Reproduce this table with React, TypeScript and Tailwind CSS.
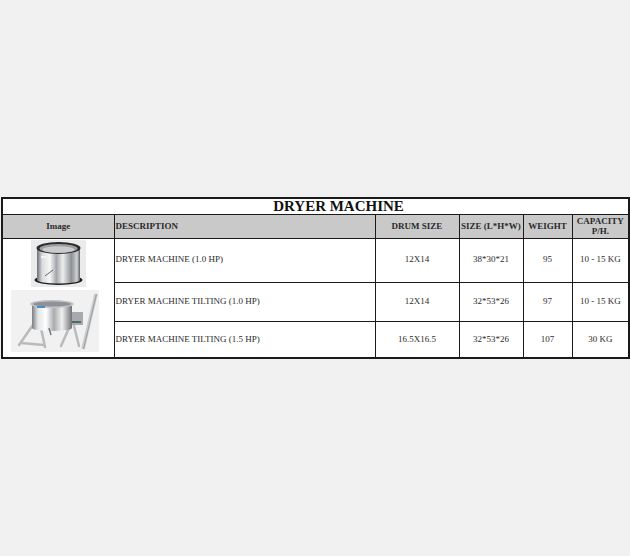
import React from 'react';

type Row = {
  desc: string;
  drum: string;
  size: string;
  weight: string;
  capacity: string;
  h: string;
};

const rows: Row[] = [
  { desc: 'DRYER MACHINE (1.0 HP)', drum: '12X14', size: '38*30*21', weight: '95', capacity: '10 - 15 KG', h: 'h-[44px]' },
  { desc: 'DRYER MACHINE TILTING (1.0 HP)', drum: '12X14', size: '32*53*26', weight: '97', capacity: '10 - 15 KG', h: 'h-[39px]' },
  { desc: 'DRYER MACHINE TILTING (1.5 HP)', drum: '16.5X16.5', size: '32*53*26', weight: '107', capacity: '30 KG', h: 'h-[37px]' },
];

function DrumPic() {
  return (
    <svg width="55" height="47" viewBox="0 0 55 47">
      <defs>
        <linearGradient id="steel" x1="0" x2="1" y1="0" y2="0">
          <stop offset="0" stopColor="#6b6e72" />
          <stop offset="0.12" stopColor="#d9dbdd" />
          <stop offset="0.3" stopColor="#f7f7f7" />
          <stop offset="0.45" stopColor="#a3a6aa" />
          <stop offset="0.6" stopColor="#eeeeee" />
          <stop offset="0.8" stopColor="#8d9094" />
          <stop offset="0.93" stopColor="#d0d2d4" />
          <stop offset="1" stopColor="#5c5f63" />
        </linearGradient>
      </defs>
      <rect width="55" height="47" fill="#ebebeb" />
      <ellipse cx="27.5" cy="40" rx="24" ry="5" fill="#1e1e1e" />
      <rect x="6" y="8" width="43" height="32" fill="url(#steel)" />
      <ellipse cx="27.5" cy="40" rx="21.5" ry="3.5" fill="url(#steel)" />
      <ellipse cx="27.5" cy="8" rx="22" ry="6" fill="#2a2a2a" />
      <ellipse cx="27.5" cy="8.5" rx="19" ry="4.5" fill="#9a9da1" />
      <ellipse cx="27.5" cy="9.5" rx="16" ry="3.2" fill="#c9cbcd" />
      <rect x="10" y="16" width="5" height="2" fill="#f2f2f2" />
      <line x1="14" y1="36" x2="22" y2="30" stroke="#444" strokeWidth="0.8" />
    </svg>
  );
}

function TiltPic() {
  return (
    <svg width="88" height="62" viewBox="0 0 88 62">
      <defs>
        <linearGradient id="steel2" x1="0" x2="1" y1="0" y2="0">
          <stop offset="0" stopColor="#7a7d81" />
          <stop offset="0.15" stopColor="#e4e5e6" />
          <stop offset="0.35" stopColor="#ffffff" />
          <stop offset="0.55" stopColor="#a9acb0" />
          <stop offset="0.75" stopColor="#f0f0f0" />
          <stop offset="1" stopColor="#6e7175" />
        </linearGradient>
      </defs>
      <rect width="88" height="62" fill="#f1f1f1" />
      {/* handle */}
      <line x1="72" y1="59" x2="85" y2="4" stroke="#c9cbcd" strokeWidth="3.5" />
      <line x1="72.5" y1="59" x2="85.5" y2="4" stroke="#8c8f93" strokeWidth="0.8" />
      {/* legs */}
      <g stroke="#b8babd" strokeWidth="2.5" strokeLinecap="round">
        <line x1="24" y1="32" x2="8" y2="55" />
        <line x1="30" y1="38" x2="34" y2="57" />
        <line x1="10" y1="53" x2="33" y2="55" />
        <line x1="62" y1="32" x2="68" y2="56" />
        <line x1="58" y1="38" x2="50" y2="56" />
      </g>
      {/* motor */}
      <rect x="60" y="22" width="12" height="13" fill="#a6a9ad" />
      <rect x="61" y="31" width="9" height="2" fill="#4f6a5a" />
      {/* bowl */}
      <rect x="21" y="14" width="40" height="24" fill="url(#steel2)" />
      <ellipse cx="41" cy="38" rx="20" ry="3" fill="url(#steel2)" />
      <ellipse cx="41" cy="14" rx="22" ry="4" fill="#bfc1c4" />
      <ellipse cx="41" cy="14" rx="19" ry="2.6" fill="#8e9195" />
      <rect x="26" y="16" width="8" height="2" fill="#4a8ec9" />
      <line x1="38" y1="38" x2="40" y2="45" stroke="#777" strokeWidth="1.5" />
    </svg>
  );
}

export default function App() {
  const cell = 'border-[1.5px] border-[#1a1a1a]';
  return (
    <div
      className="min-h-[556px] bg-[#f1f1f1] pt-[197px] px-[1px] text-[#222]"
      style={{ fontFamily: '"Liberation Serif", "Times New Roman", serif' }}
    >
      <table className="w-[627px] table-fixed border-collapse border-2 border-[#1a1a1a] bg-white">
        <colgroup>
          <col className="w-[112px]" />
          <col className="w-[261px]" />
          <col className="w-[84px]" />
          <col className="w-[64px]" />
          <col className="w-[49px]" />
          <col className="w-[57px]" />
        </colgroup>
        <tbody>
          <tr className="h-[16px]">
            <td colSpan={6} className={`${cell} pl-[46px] text-center text-[15px] font-bold leading-[14px] text-[#111]`}>
              DRYER MACHINE
            </td>
          </tr>
          <tr className="h-[24px] bg-[#c9c9c9] text-[9px] font-bold leading-[10px] text-[#2a2a2a]">
            <td className={`${cell} text-center`}>Image</td>
            <td className={`${cell} pl-[1px]`}>DESCRIPTION</td>
            <td className={`${cell} text-center`}>DRUM SIZE</td>
            <td className={`${cell} text-center`}>SIZE (L*H*W)</td>
            <td className={`${cell} text-center`}>WEIGHT</td>
            <td className={`${cell} text-center`}>
              CAPACITY
              <br />
              P/H.
            </td>
          </tr>
          {rows.map((r, i) => (
            <tr key={i} className={`${r.h} text-[9px] text-[#2a2a2a]`}>
              {i === 0 && (
                <td rowSpan={3} className={`${cell} align-top`}>
                  <div className="flex flex-col items-center gap-[3px] pt-[1px]">
                    <DrumPic />
                    <div className="self-start pl-[8px]">
                      <TiltPic />
                    </div>
                  </div>
                </td>
              )}
              <td className={`${cell} pl-[1px]`}>{r.desc}</td>
              <td className={`${cell} text-center`}>{r.drum}</td>
              <td className={`${cell} text-center`}>{r.size}</td>
              <td className={`${cell} text-center`}>{r.weight}</td>
              <td className={`${cell} text-center`}>{r.capacity}</td>
            </tr>
          ))}
        </tbody>
      </table>
    </div>
  );
}
